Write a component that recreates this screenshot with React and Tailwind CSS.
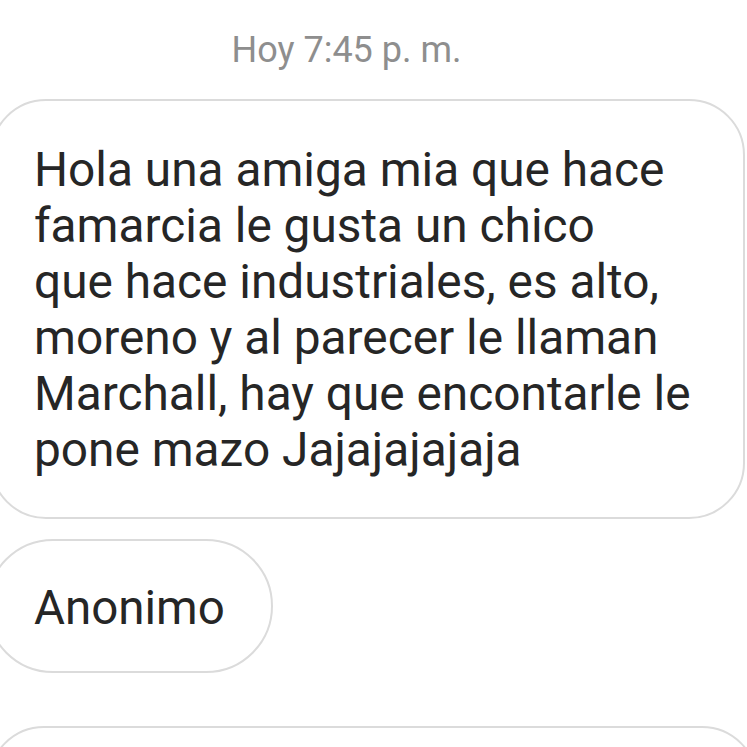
export default function App() {
  const lines = [
    "Hola una amiga mia que hace",
    "famarcia le gusta un chico",
    "que hace industriales, es alto,",
    "moreno y al parecer le llaman",
    "Marchall, hay que encontarle le",
    "pone mazo Jajajajajaja",
  ];

  return (
    <div className="w-[747px] h-[747px] overflow-hidden bg-white font-['Roboto',sans-serif] text-[#262626]">
      {/* timestamp */}
      <div className="flex justify-center pr-[54px] pt-[27px] text-[36px] leading-[46px] text-[#8e8e8e]">
        Hoy 7:45 p. m.
      </div>

      {/* first message */}
      <div className="mt-[26px] ml-[-10px] w-[755px] rounded-[56px] border-2 border-[#dbdbdb] pl-[42px] pt-[41px] pb-[39px] text-[47.8px] leading-[56px]">
        {lines.map((l) => (
          <div key={l}>{l}</div>
        ))}
      </div>

      {/* sender */}
      <div className="mt-[20px] ml-[-14px] flex h-[134px] w-[287px] items-center rounded-full border-2 border-[#dbdbdb] pl-[46px] pt-[5px] text-[47.5px]">
        Anonimo
      </div>

      {/* next message, cut off */}
      <div className="mt-[53px] ml-[-12px] h-[120px] w-[770px] rounded-[56px] border-2 border-[#dbdbdb]" />
    </div>
  );
}
